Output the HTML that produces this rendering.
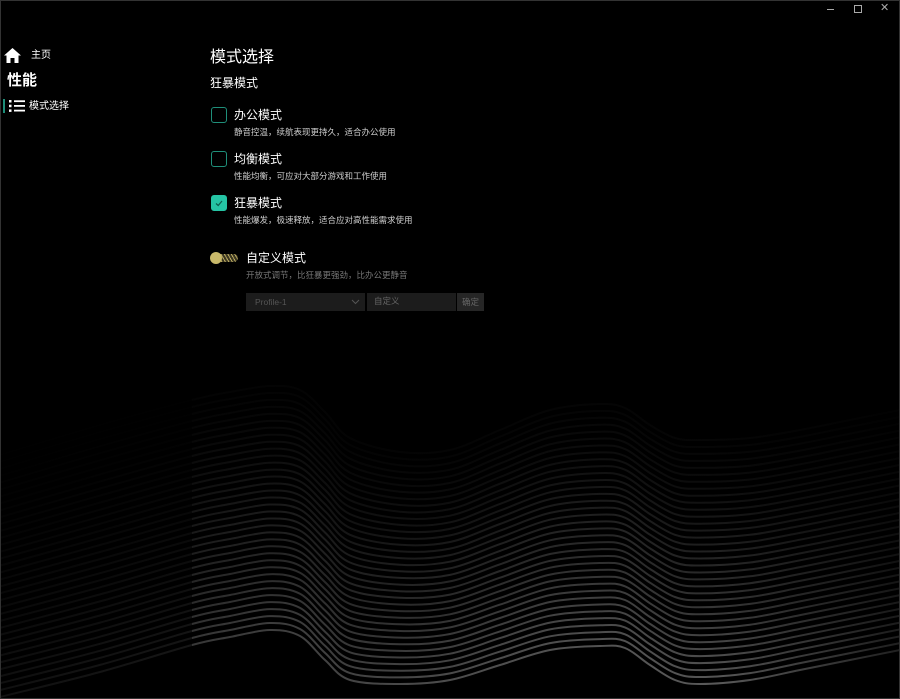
<!DOCTYPE html>
<html><head><meta charset="utf-8">
<style>
html,body{margin:0;padding:0;background:#000;width:900px;height:699px;overflow:hidden;font-family:"Liberation Sans","Noto Sans CJK SC",sans-serif;color:#fff}
#bg{position:absolute;left:0;top:0}
.side{position:absolute;left:0;top:0;width:192px;height:699px;background:rgba(0,0,0,0.6)}
.t{position:absolute;white-space:nowrap;line-height:1}
.cb{position:absolute;left:211px;width:14px;height:14px;border:1.5px solid #1f8f7a;border-radius:3px}
.cb.on{background:#25c4a4;border-color:#25c4a4}
.desc{font-size:8.5px;color:#cfcfcf}
.frame{position:absolute;left:0;top:0;width:898px;height:697px;border:1px solid #333}
</style></head><body>
<svg id="bg" width="900" height="699"></svg>
<div class="side"></div>
<div class="frame"></div>
<div style="position:absolute;left:827px;top:9px;width:7px;height:1px;background:#aaa"></div>
<div style="position:absolute;left:854px;top:5px;width:6px;height:6px;border:1px solid #aaa"></div>
<div class="t" style="left:880px;top:3px;font-size:11px;color:#aaa">✕</div>
<svg style="position:absolute;left:4px;top:48px" width="17" height="15" viewBox="0 0 17 15"><path d="M8.5 0 L17 7.5 L14.5 7.5 L14.5 15 L10.5 15 L10.5 10 L6.5 10 L6.5 15 L2.5 15 L2.5 7.5 L0 7.5 Z" fill="#fff"/></svg>
<div class="t" style="left:31px;top:51px;font-size:10px">主页</div>
<div class="t" style="left:7px;top:73px;font-size:15px;font-weight:bold">性能</div>
<div style="position:absolute;left:3px;top:99px;width:2px;height:14px;background:#1f8f7a"></div>
<svg style="position:absolute;left:9px;top:100px" width="16" height="12" viewBox="0 0 16 12"><rect x="0" y="0" width="2.5" height="2.5" fill="#fff"/><rect x="0" y="4.7" width="2.5" height="2.5" fill="#fff"/><rect x="0" y="9.4" width="2.5" height="2.5" fill="#fff"/><rect x="5" y="0.3" width="11" height="1.8" fill="#fff"/><rect x="5" y="5" width="11" height="1.8" fill="#fff"/><rect x="5" y="9.7" width="11" height="1.8" fill="#fff"/></svg>
<div class="t" style="left:29px;top:102px;font-size:10px">模式选择</div>
<div class="t" style="left:210px;top:50px;font-size:16px">模式选择</div>
<div class="t" style="left:210px;top:77px;font-size:12px">狂暴模式</div>
<div class="cb" style="top:107px"></div>
<div class="t" style="left:234px;top:109px;font-size:12px">办公模式</div>
<div class="t desc" style="left:234px;top:128px">静音控温，续航表现更持久，适合办公使用</div>
<div class="cb" style="top:151px"></div>
<div class="t" style="left:234px;top:153px;font-size:12px">均衡模式</div>
<div class="t desc" style="left:234px;top:172px">性能均衡，可应对大部分游戏和工作使用</div>
<div class="cb on" style="top:195px"><svg width="14" height="14" viewBox="0 0 14 14" style="position:absolute;left:0;top:0"><path d="M4 7.5 L6.2 9.5 L10 5" stroke="#0d5b4c" stroke-width="1.2" fill="none"/></svg></div>
<div class="t" style="left:234px;top:197px;font-size:12px">狂暴模式</div>
<div class="t desc" style="left:234px;top:216px">性能爆发，极速释放，适合应对高性能需求使用</div>
<div style="position:absolute;left:211px;top:254px;width:27px;height:8px;border-radius:4px;background:#3a3520;overflow:hidden;background-image:repeating-linear-gradient(60deg,#b8a860 0 1px,transparent 1px 3px)"></div>
<div style="position:absolute;left:210px;top:252px;width:12px;height:12px;border-radius:6px;background:#c9b96a"></div>
<div class="t" style="left:246px;top:252px;font-size:12px">自定义模式</div>
<div class="t" style="left:246px;top:271px;font-size:8.5px;color:#777">开放式调节，比狂暴更强劲，比办公更静音</div>
<div style="position:absolute;left:246px;top:293px;width:119px;height:18px;background:#1c1c1c"></div>
<div class="t" style="left:255px;top:298px;font-size:8.5px;color:#555">Profile-1</div>
<svg style="position:absolute;left:351px;top:299px" width="9" height="6"><path d="M1 1 L4.5 4.5 L8 1" stroke="#555" fill="none"/></svg>
<div style="position:absolute;left:367px;top:293px;width:89px;height:18px;background:#1c1c1c"></div>
<div class="t" style="left:374px;top:297px;font-size:8.5px;color:#666">自定义</div>
<div style="position:absolute;left:457px;top:293px;width:27px;height:18px;background:#262626"></div>
<div class="t" style="left:462px;top:298px;font-size:8.5px;color:#666">确定</div>
<script>
(function(){
var xs=[0,100,192,230,270,300,325,350,400,450,500,550,600,625,650,675,700,750,800,850,900];
var top=[455,425,400,392,386,390,412,438,452,450,430,410,404,408,425,438,440,438,430,420,410];
var bot=[697,672,645,637,630,636,660,680,684,680,665,650,646,648,665,680,684,680,670,660,650];
var svg=document.getElementById('bg');var N=36;var s='';
s+='<defs><linearGradient id="g" x1="0" x2="1" y1="0" y2="0"><stop offset="0" stop-color="#444"/><stop offset="0.2" stop-color="#555"/><stop offset="0.5" stop-color="#777"/><stop offset="0.8" stop-color="#8a8a8a"/><stop offset="1" stop-color="#333"/></linearGradient></defs>';
function cr(p){var d='M'+p[0][0]+' '+p[0][1];for(var i=0;i<p.length-1;i++){var p0=p[i-1]||p[i],p1=p[i],p2=p[i+1],p3=p[i+2]||p2;
d+=' C'+(p1[0]+(p2[0]-p0[0])/6).toFixed(1)+' '+(p1[1]+(p2[1]-p0[1])/6).toFixed(1)+' '+(p2[0]-(p3[0]-p1[0])/6).toFixed(1)+' '+(p2[1]-(p3[1]-p1[1])/6).toFixed(1)+' '+p2[0]+' '+p2[1];}return d;}
for(var k=0;k<N;k++){var t=k/(N-1);var pts=[];for(var i=0;i<xs.length;i++){pts.push([xs[i],+(top[i]+(bot[i]-top[i])*t).toFixed(1)]);}
var op=(0.04+0.6*Math.pow(t,1.4)).toFixed(2);
s+='<path d="'+cr(pts)+'" stroke="url(#g)" stroke-width="2" fill="none" opacity="'+op+'"/>';}
svg.innerHTML=s;})();
</script>
</body></html>
